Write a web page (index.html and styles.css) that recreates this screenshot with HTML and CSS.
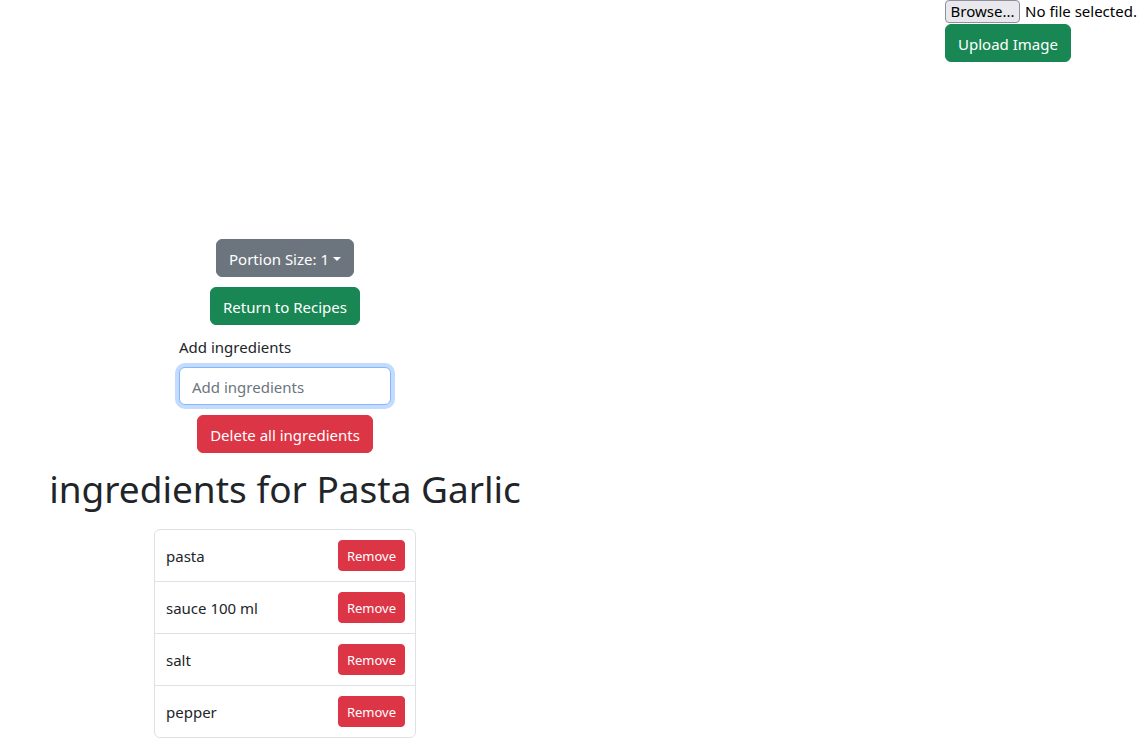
FILE: index.html
```html
<!DOCTYPE html>
<html lang="en">
<head>
<meta charset="utf-8">
<title>Ingredients</title>
<link rel="stylesheet" href="styles.css">
</head>
<body>
<div class="topbar">
  <div class="upload">
    <div class="file-row">
      <span class="file-btn">Browse...</span>
      <span class="file-name">No file selected.</span>
    </div>
    <button class="btn btn-success">Upload Image</button>
  </div>
</div>
<main class="column">
  <button class="btn btn-secondary dropdown-toggle">Portion Size: 1</button>
  <button class="btn btn-success">Return to Recipes</button>
  <div class="form-group">
    <label class="form-label" for="ing">Add ingredients</label>
    <input class="form-control" id="ing" type="text" placeholder="Add ingredients">
  </div>
  <button class="btn btn-danger">Delete all ingredients</button>
  <h1 class="title">ingredients for Pasta Garlic</h1>
  <ul class="list">
    <li class="list-item"><span>pasta</span><button class="btn btn-danger btn-sm">Remove</button></li>
    <li class="list-item"><span>sauce 100 ml</span><button class="btn btn-danger btn-sm">Remove</button></li>
    <li class="list-item"><span>salt</span><button class="btn btn-danger btn-sm">Remove</button></li>
    <li class="list-item"><span>pepper</span><button class="btn btn-danger btn-sm">Remove</button></li>
  </ul>
</main>
</body>
</html>
```
FILE: styles.css
```css
* { box-sizing: border-box; }
html, body { margin: 0; padding: 0; background: #fff; }
body {
  font-family: "Noto Sans", "Open Sans", sans-serif;
  font-size: 15px;
  line-height: 24px;
  color: #212529;
}
.topbar {
  display: grid;
  grid-template-columns: 945px auto;
}
.upload {
  grid-column: 2;
  display: flex;
  flex-direction: column;
  align-items: flex-start;
  gap: 2px;
}
.file-row {
  display: flex;
  align-items: center;
  gap: 5px;
  height: 22px;
  white-space: nowrap;
}
.file-btn {
  display: inline-block;
  width: 75px;
  height: 23px;
  line-height: 20px;
  text-align: center;
  background: #e9e9ed;
  border: 1px solid #8f8f9d;
  border-radius: 4px;
  color: #000;
}
.file-name { color: #000; line-height: 20px; }
.btn {
  display: inline-block;
  font-family: inherit;
  font-size: 15px;
  line-height: 24px;
  padding: 7px 12px 5px;
  border: 1px solid transparent;
  border-radius: 6px;
  color: #fff;
  cursor: pointer;
}
.btn-success { background: #198754; border-color: #198754; }
.btn-secondary { background: #6c757d; border-color: #6c757d; }
.btn-danger { background: #dc3545; border-color: #dc3545; }
.btn-sm {
  font-size: 13px;
  line-height: 21px;
  padding: 5px 8px 3px;
  border-radius: 4px;
}
.dropdown-toggle::after {
  content: "";
  display: inline-block;
  margin-left: 4px;
  vertical-align: 4px;
  border-top: 4px solid #fff;
  border-left: 4px solid transparent;
  border-right: 4px solid transparent;
}
.column {
  width: 570px;
  margin-top: 177px;
  display: flex;
  flex-direction: column;
  align-items: center;
  gap: 10px;
}
.form-group {
  width: 212px;
  display: flex;
  flex-direction: column;
}
.form-label {
  margin-bottom: 8px;
  padding-top: 1px;
  line-height: 23px;
}
.form-control {
  width: 100%;
  height: 38px;
  font-family: inherit;
  font-size: 15px;
  padding: 7px 12px 5px;
  border: 1px solid #86b7fe;
  border-radius: 6px;
  box-shadow: 0 0 0 4px rgba(13, 110, 253, 0.25);
  outline: none;
  color: #212529;
}
.form-control::placeholder { color: #6c757d; }
.title {
  margin: 0 0 8px;
  padding-top: 3px;
  font-size: 37px;
  font-weight: 400;
  line-height: 45px;
  white-space: nowrap;
}
.list {
  list-style: none;
  margin: 0;
  padding: 0;
  width: 262px;
  border: 1px solid #dee2e6;
  border-radius: 6px;
}
.list-item {
  display: flex;
  justify-content: space-between;
  align-items: center;
  padding: 10px 10px 10px 11px;
  border-top: 1px solid #dee2e6;
}
.list-item > span { padding-top: 1px; }
.list-item:first-child { border-top: none; }
```
